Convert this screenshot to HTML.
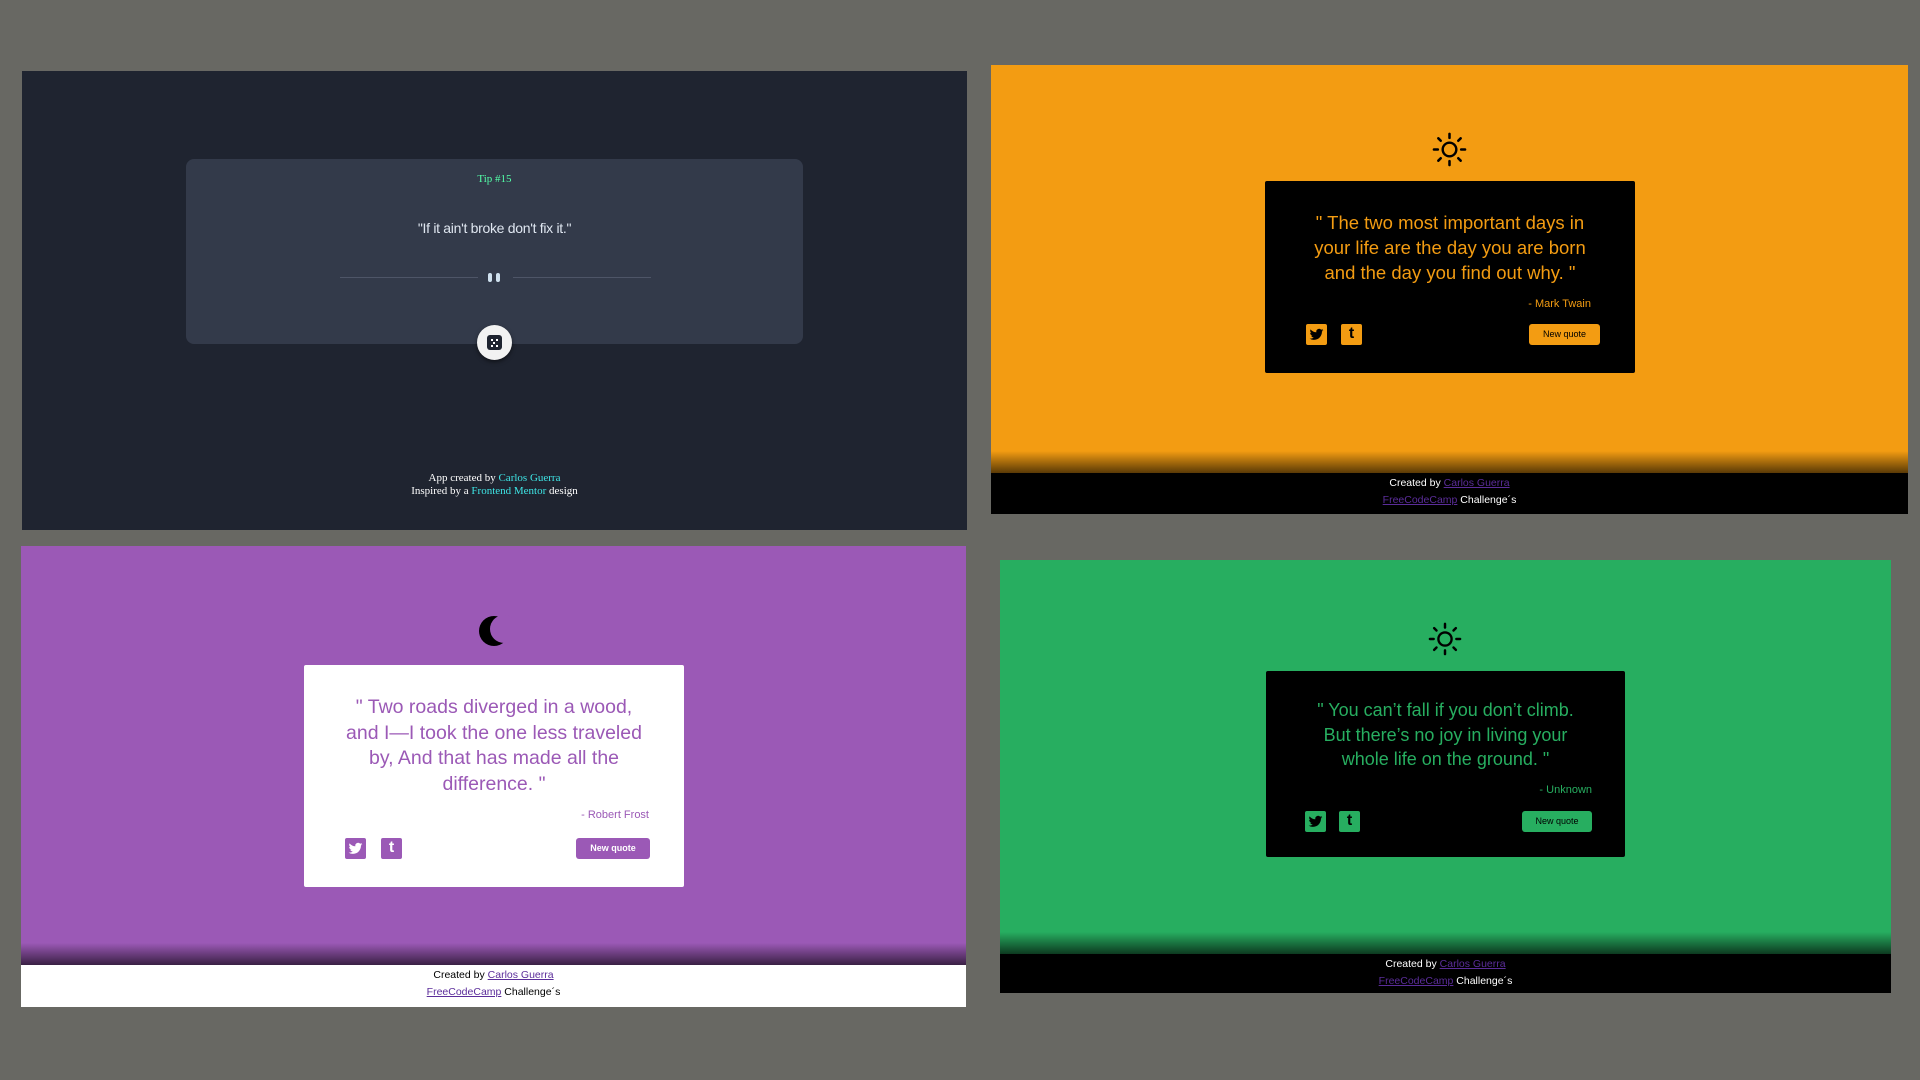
<!DOCTYPE html>
<html><head><meta charset="utf-8"><style>
*{margin:0;padding:0;box-sizing:border-box}
body{width:1920px;height:1080px;background:#686863;position:relative;overflow:hidden;font-family:"Liberation Sans",sans-serif}
.p{position:absolute;overflow:hidden}
.abs{position:absolute}
.q{position:absolute;text-align:center;font-size:19px;line-height:25px}
.auth{position:absolute;font-size:11px;text-align:right}
.ic{position:absolute;width:21px;height:21px;border-radius:2px}
.ic svg{position:absolute;left:3px;top:3px}
.ic span{position:absolute;left:0;right:0;top:1px;text-align:center;font-size:16px;font-weight:bold}
.btn{position:absolute;border-radius:3px;font-size:9px;text-align:center;line-height:21px;height:21px}
.ft{position:absolute;left:0;right:0;text-align:center;font-size:10.5px;line-height:17px}
.ft a{color:#5b2d9a;text-decoration:underline}
.sh{position:absolute;left:0;right:0;height:22px}
</style></head><body>

<!-- dark panel -->
<div class="p" style="left:22px;top:71px;width:945px;height:459px;background:#1f2430">
  <div class="abs" style="left:164px;top:88px;width:617px;height:185px;background:#333a4a;border-radius:8px"></div>
  <div class="abs" style="left:0;width:945px;top:102px;text-align:center;font-family:'Liberation Serif',serif;font-size:11px;color:#53ffa8">Tip #15</div>
  <div class="abs" style="left:0;width:945px;top:149px;text-align:center;font-size:14px;color:#dfe6f0;letter-spacing:-0.3px">"If it ain't broke don't fix it."</div>
  <div class="abs" style="left:318px;top:206px;width:138px;height:1px;background:#4e5567"></div>
  <div class="abs" style="left:491px;top:206px;width:138px;height:1px;background:#4e5567"></div>
  <div class="abs" style="left:466px;top:202px;width:4px;height:9px;background:#cfe0ee;border-radius:2px"></div>
  <div class="abs" style="left:474px;top:202px;width:4px;height:9px;background:#cfe0ee;border-radius:2px"></div>
  <div class="abs" style="left:455px;top:254px;width:35px;height:35px;border-radius:50%;background:#f2f2f2;box-shadow:0 2px 4px rgba(0,0,0,.5)"></div>
  <div class="abs" style="left:465px;top:264px;width:15px;height:15px;border-radius:3px;background:#1f2430"></div>
  <div class="abs" style="left:469px;top:268px;width:2px;height:2px;background:#fff"></div>
  <div class="abs" style="left:474px;top:268px;width:2px;height:2px;background:#fff"></div>
  <div class="abs" style="left:471px;top:271px;width:2px;height:2px;background:#fff"></div>
  <div class="abs" style="left:469px;top:274px;width:2px;height:2px;background:#fff"></div>
  <div class="abs" style="left:474px;top:274px;width:2px;height:2px;background:#fff"></div>
  <div class="abs" style="left:0;width:945px;top:401px;text-align:center;font-family:'Liberation Serif',serif;font-size:11px;line-height:13px;color:#fff">App created by <span style="color:#3ee5e5">Carlos Guerra</span><br>Inspired by a <span style="color:#3ee5e5">Frontend Mentor</span> design</div>
</div>

<svg width="0" height="0" style="position:absolute"><defs><symbol id="tw" viewBox="0 0 24 24"><path d="M23 5c-.8.4-1.7.6-2.6.7.9-.6 1.6-1.4 2-2.5-.9.5-1.900.9-2.9 1.1A4.5 4.5 0 0 0 11.8 8.4 12.8 12.8 0 0 1 2.5 3.7a4.5 4.5 0 0 0 1.4 6 4.5 4.5 0 0 1-2-.6v.1a4.5 4.5 0 0 0 3.6 4.4 4.5 4.5 0 0 1-2 .1 4.5 4.5 0 0 0 4.2 3.1A9 9 0 0 1 1 18.6 12.8 12.8 0 0 0 7.9 20.6c8.3 0 12.8-6.9 12.8-12.8v-.6c.9-.6 1.6-1.4 2.3-2.2z"/></symbol></defs></svg>

<!-- orange panel -->
<div class="p" style="left:991px;top:65px;width:917px;height:449px;background:#f39c12">
  <svg class="abs" style="left:441px;top:67px" width="35" height="35" viewBox="0 0 36 36"><circle cx="18" cy="18" r="7" fill="none" stroke="#000" stroke-width="2.5"/><g stroke="#000" stroke-width="2.6" stroke-linecap="round"><line x1="18" y1="2" x2="18" y2="6"/><line x1="18" y1="30" x2="18" y2="34"/><line x1="2" y1="18" x2="6" y2="18"/><line x1="30" y1="18" x2="34" y2="18"/><line x1="6.5" y1="6.5" x2="9" y2="9"/><line x1="27" y1="27" x2="29.5" y2="29.5"/><line x1="6.5" y1="29.5" x2="9" y2="27"/><line x1="27" y1="9" x2="29.5" y2="6.5"/></g></svg>
  <div class="abs" style="left:274px;top:116px;width:370px;height:192px;background:#000;border-radius:2px"></div>
  <div class="q" style="left:309px;width:300px;top:145px;color:#f39c12;font-size:18.5px">" The two most important days in your life are the day you are born and the day you find out why. "</div>
  <div class="auth" style="left:274px;width:326px;top:233px;color:#f39c12">- Mark Twain</div>
  <div class="ic" style="left:315px;top:259px;background:#f39c12"><svg width="15" height="15" fill="#000"><use href="#tw"/></svg></div>
  <div class="ic" style="left:350px;top:259px;background:#f39c12"><span style="color:#000">t</span></div>
  <div class="btn" style="left:538px;top:259px;width:71px;background:#f39c12;color:#000">New quote</div>
  <div class="sh" style="top:386px;background:linear-gradient(#f39c12,#5a3a06)"></div>
  <div class="abs" style="left:0;right:0;top:408px;height:41px;background:#000"></div>
  <div class="ft" style="top:410px;color:#fff">Created by <a>Carlos Guerra</a><br><a>FreeCodeCamp</a> Challenge´s</div>
</div>

<!-- purple panel -->
<div class="p" style="left:21px;top:546px;width:945px;height:461px;background:#9b59b6">
  <svg class="abs" style="left:456px;top:68px" width="36" height="34" viewBox="0 0 36 34"><circle cx="17" cy="17" r="15" fill="#000"/><circle cx="27" cy="15" r="14" fill="#9b59b6"/></svg>
  <div class="abs" style="left:283px;top:119px;width:380px;height:222px;background:#fff;border-radius:2px"></div>
  <div class="q" style="left:318px;width:310px;top:149px;color:#9b59b6;font-size:19.5px;line-height:25.5px">" Two roads diverged in a wood, and I—I took the one less traveled by, And that has made all the difference. "</div>
  <div class="auth" style="left:283px;width:345px;top:263px;color:#9b59b6">- Robert Frost</div>
  <div class="ic" style="left:324px;top:292px;background:#9b59b6"><svg width="15" height="15" fill="#fff"><use href="#tw"/></svg></div>
  <div class="ic" style="left:360px;top:292px;background:#9b59b6"><span style="color:#fff">t</span></div>
  <div class="btn" style="left:555px;top:292px;width:74px;background:#9b59b6;color:#fff;font-weight:bold">New quote</div>
  <div class="sh" style="top:397px;background:linear-gradient(#9b59b6,#3a2044)"></div>
  <div class="abs" style="left:0;right:0;top:419px;height:42px;background:#fff"></div>
  <div class="ft" style="top:421px;color:#000">Created by <a>Carlos Guerra</a><br><a>FreeCodeCamp</a> Challenge´s</div>
</div>

<!-- green panel -->
<div class="p" style="left:1000px;top:560px;width:891px;height:433px;background:#27ae60">
  <svg class="abs" style="left:428px;top:62px" width="34" height="34" viewBox="0 0 36 36"><circle cx="18" cy="18" r="7" fill="none" stroke="#000" stroke-width="2.5"/><g stroke="#000" stroke-width="2.6" stroke-linecap="round"><line x1="18" y1="2" x2="18" y2="6"/><line x1="18" y1="30" x2="18" y2="34"/><line x1="2" y1="18" x2="6" y2="18"/><line x1="30" y1="18" x2="34" y2="18"/><line x1="6.5" y1="6.5" x2="9" y2="9"/><line x1="27" y1="27" x2="29.5" y2="29.5"/><line x1="6.5" y1="29.5" x2="9" y2="27"/><line x1="27" y1="9" x2="29.5" y2="6.5"/></g></svg>
  <div class="abs" style="left:266px;top:111px;width:359px;height:186px;background:#000;border-radius:2px"></div>
  <div class="q" style="left:303px;width:285px;top:138px;color:#27ae60;font-size:18px;line-height:24.5px">" You can’t fall if you don’t climb. But there’s no joy in living your whole life on the ground. "</div>
  <div class="auth" style="left:266px;width:326px;top:224px;color:#27ae60">- Unknown</div>
  <div class="ic" style="left:305px;top:251px;background:#27ae60"><svg width="15" height="15" fill="#000"><use href="#tw"/></svg></div>
  <div class="ic" style="left:339px;top:251px;background:#27ae60"><span style="color:#000">t</span></div>
  <div class="btn" style="left:522px;top:251px;width:70px;background:#27ae60;color:#000">New quote</div>
  <div class="sh" style="top:372px;background:linear-gradient(#27ae60,#0d3a20)"></div>
  <div class="abs" style="left:0;right:0;top:394px;height:39px;background:#000"></div>
  <div class="ft" style="top:396px;color:#fff">Created by <a>Carlos Guerra</a><br><a>FreeCodeCamp</a> Challenge´s</div>
</div>

</body></html>
